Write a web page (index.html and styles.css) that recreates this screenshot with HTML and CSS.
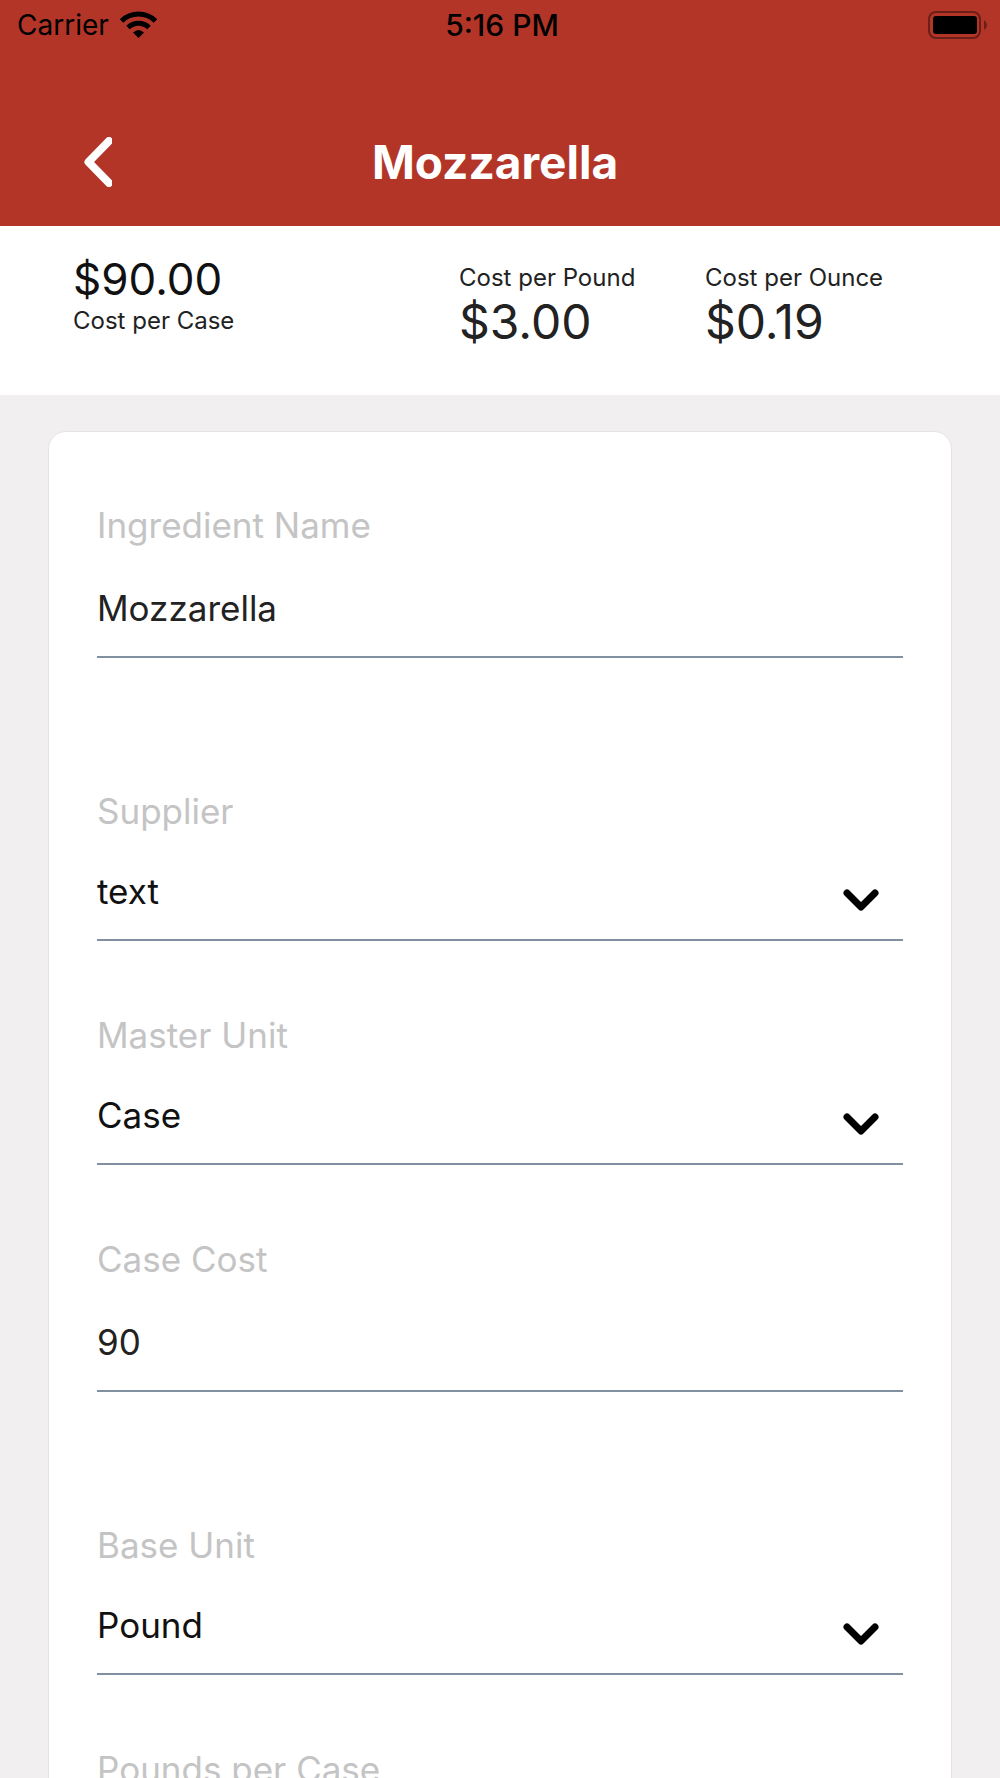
FILE: index.html
```html
<!DOCTYPE html>
<html lang="en">
<head>
  <meta charset="UTF-8" />
  <meta name="viewport" content="width=device-width, initial-scale=1" />
  <title>Mozzarella</title>
  <link rel="stylesheet" href="styles.css">
</head>
<body>

<header class="header">
  <div class="status-bar">
    <div class="carrier">
      <span>Carrier</span>
      <svg class="wifi" width="37" height="28" viewBox="0 0 37 28" aria-hidden="true">
        <path d="M1.5 10 A24 24 0 0 1 35.5 10" fill="none" stroke="#000" stroke-width="5"/>
        <path d="M8 16.500 A15 15 0 0 1 29 16.500" fill="none" stroke="#000" stroke-width="5"/>
        <path d="M13 21.5 Q18.500 16.500 24 21.500 L18.500 27 Z"/>
      </svg>
    </div>
    <div class="clock">5:16 PM</div>
    <svg class="battery" width="60" height="28" viewBox="0 0 60 28" aria-hidden="true">
      <rect x="2" y="1" width="51" height="26" rx="7" fill="none" stroke="#6b1f18" stroke-width="2"/>
      <rect x="6" y="5" width="44" height="18" rx="3"/>
      <path d="M57 9 Q60 11 60 14 Q60 17 57 19 Z" fill="#6b1f18"/>
    </svg>
  </div>
  <div class="nav-bar">
    <button type="button" class="back" aria-label="Back">
      <svg width="28" height="50" viewBox="0 0 28 50" aria-hidden="true">
        <path d="M25 4 L4.500 25 L25 46" fill="none" stroke="#fff" stroke-width="8" stroke-linecap="round" stroke-linejoin="round"/>
      </svg>
    </button>
    <h1>Mozzarella</h1>
  </div>
</header>

<section class="summary">
  <div class="case-cost">
    <div class="amount">$90.00</div>
    <div class="caption">Cost per Case</div>
  </div>
  <div class="unit-cost">
    <div class="caption">Cost per Pound</div>
    <div class="amount">$3.00</div>
  </div>
  <div class="unit-cost">
    <div class="caption">Cost per Ounce</div>
    <div class="amount">$0.19</div>
  </div>
</section>

<main class="content">
  <form class="card">
    <div class="field text-field">
      <label for="name">Ingredient Name</label>
      <input type="text" id="name" value="Mozzarella">
    </div>

    <div class="field select-field">
      <label for="supplier">Supplier</label>
      <select id="supplier">
        <option>text</option>
      </select>
      <svg class="chevron" width="36" height="22" viewBox="0 0 36 22" aria-hidden="true">
        <path d="M4 4 L18 18 L32 4"/>
      </svg>
    </div>

    <div class="field select-field">
      <label for="masterUnit">Master Unit</label>
      <select id="masterUnit">
        <option>Case</option>
      </select>
      <svg class="chevron" width="36" height="22" viewBox="0 0 36 22" aria-hidden="true">
        <path d="M4 4 L18 18 L32 4"/>
      </svg>
    </div>

    <div class="field text-field">
      <label for="caseCost">Case Cost</label>
      <input type="text" id="caseCost" inputmode="decimal" value="90">
    </div>

    <div class="field select-field">
      <label for="baseUnit">Base Unit</label>
      <select id="baseUnit">
        <option>Pound</option>
      </select>
      <svg class="chevron" width="36" height="22" viewBox="0 0 36 22" aria-hidden="true">
        <path d="M4 4 L18 18 L32 4"/>
      </svg>
    </div>

    <div class="field text-field">
      <label for="perCase">Pounds per Case</label>
      <input type="text" id="perCase" inputmode="decimal">
    </div>
  </form>
</main>

</body>
</html>
```
FILE: styles.css
```css
* {
  box-sizing: border-box;
}
body {
  display: flex;
  flex-direction: column;
  height: 100vh;
  margin: 0;
  background: #f1eff0;
  color: #222;
  font-family: Inter, "Liberation Sans", sans-serif;
}

/* Header */
.header {
  flex: none;
  padding-bottom: 32px;
  background: #b33528;
}
.status-bar {
  display: grid;
  grid-template-columns: 1fr auto 1fr;
  align-items: center;
  height: 50px;
  padding: 0 13px 0 17px;
  color: #000;
  font-size: 28px;
  line-height: 34px;
}
.carrier {
  display: flex;
  align-items: center;
  gap: 11px;
}
.clock {
  font-size: 30px;
  font-weight: 500;
}
.battery {
  justify-self: end;
}
.nav-bar {
  display: flex;
  align-items: center;
  padding: 80px 134px 0 72px;
}
.back {
  display: flex;
  padding: 7px 12px;
  border: none;
  background: none;
  cursor: pointer;
}
h1 {
  flex: 1;
  margin: 0;
  color: #fff;
  font-size: 46px;
  line-height: 60px;
  text-align: center;
}

/* Cost summary */
.summary {
  flex: none;
  display: grid;
  grid-template-columns: 386fr 246fr 223fr;
  padding: 29px 72px 43px 73px;
  background: #fff;
}
.caption {
  font-size: 24px;
  line-height: 28px;
}
.case-cost .amount {
  margin-bottom: 4px;
  color: #111;
  font-size: 44px;
  line-height: 48px;
}
.unit-cost {
  padding-top: 9px;
}
.unit-cost .amount {
  font-size: 48px;
  line-height: 60px;
}

/* Form */
.content {
  flex: 1;
  min-height: 0;
  padding: 36px 48px;
  overflow-y: auto;
  scrollbar-width: none;
}
.card {
  padding: 71px 48px 0;
  border: 1px solid #e6e3e4;
  border-radius: 18px;
  background: #fff;
}
.field {
  position: relative;
  display: flex;
  flex-direction: column;
  font-size: 35px;
  line-height: 44px;
}
.field label {
  color: #c4c4c4;
}
.field input,
.field select {
  width: 100%;
  height: 72px;
  padding: 0 0 26px;
  border: none;
  border-bottom: 2px solid #8090a0;
  border-radius: 0;
  outline: none;
  background: none;
  color: #222;
  font: inherit;
  appearance: none;
}
.field select {
  color: #111;
}
.text-field {
  gap: 39px;
  padding-bottom: 131px;
}
.select-field {
  gap: 36px;
  padding-bottom: 72px;
}
.chevron {
  position: absolute;
  right: 24px;
  bottom: 102px;
  fill: none;
  stroke: #000;
  stroke-width: 7;
  stroke-linecap: round;
  stroke-linejoin: round;
  pointer-events: none;
}
```
